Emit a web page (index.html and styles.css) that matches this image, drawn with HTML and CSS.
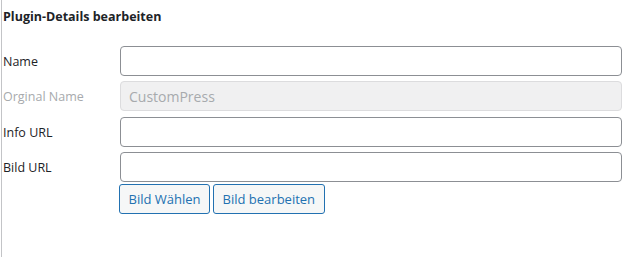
FILE: index.html
```html
<!DOCTYPE html>
<html lang="de">
<head>
    <meta charset="UTF-8">
    <title>Plugin-Details bearbeiten</title>
    <link rel="stylesheet" href="styles.css">
</head>
<body>
    <div class="panel">
        <h3 class="panel-title">Plugin-Details bearbeiten</h3>
        <div class="form-grid">
            <label class="field-label" for="name">Name</label>
            <input class="field-input" id="name" type="text">

            <label class="field-label muted" for="orig">Orginal Name</label>
            <input class="field-input" id="orig" type="text" value="CustomPress" disabled>

            <label class="field-label" for="info">Info URL</label>
            <input class="field-input" id="info" type="text">

            <label class="field-label" for="bild">Bild URL</label>
            <div class="field-stack">
                <input class="field-input" id="bild" type="text">
                <div class="button-row">
                    <button class="button" type="button">Bild Wählen</button>
                    <button class="button" type="button">Bild bearbeiten</button>
                </div>
            </div>
        </div>
    </div>
</body>
</html>
```

FILE: styles.css
```css
* {
    margin: 0;
    padding: 0;
    box-sizing: border-box;
}

body {
    font-family: 'Open Sans', 'Noto Sans', sans-serif;
    font-size: 12.5px;
    color: #1d2327;
    background: #fff;
}

.panel {
    margin-left: 1px;
    border-left: 1px solid #c3c4c7;
    padding: 8px 4px 0 1px;
    height: 257px;
}

.panel-title {
    font-size: 12.5px;
    font-weight: 700;
    line-height: 18px;
    margin-bottom: 20px;
}

.form-grid {
    display: grid;
    grid-template-columns: 117px 1fr;
    row-gap: 5.4px;
    align-items: start;
}

.field-label {
    line-height: 30px;
    padding-top: 1px;
    height: 30px;
}

.muted {
    color: #a7aaad;
}

.field-input {
    width: 100%;
    height: 30px;
    border: 1px solid #8c8f94;
    border-radius: 4px;
    background: #fff;
    padding: 0 8px;
    font-family: inherit;
    font-size: 14px;
    color: #2c3338;
}

.field-input:disabled {
    background: #f0f0f1;
    border-color: #dcdcde;
    color: #a7aaad;
}

.field-stack {
    display: flex;
    flex-direction: column;
    gap: 2px;
}

.button-row {
    display: flex;
    gap: 3px;
    margin-left: -1px;
}

.button {
    height: 30px;
    padding: 0 8.5px;
    border: 1px solid #2271b1;
    border-radius: 3px;
    background: #f6f7f7;
    color: #2271b1;
    font-family: inherit;
    font-size: 13px;
}
```
